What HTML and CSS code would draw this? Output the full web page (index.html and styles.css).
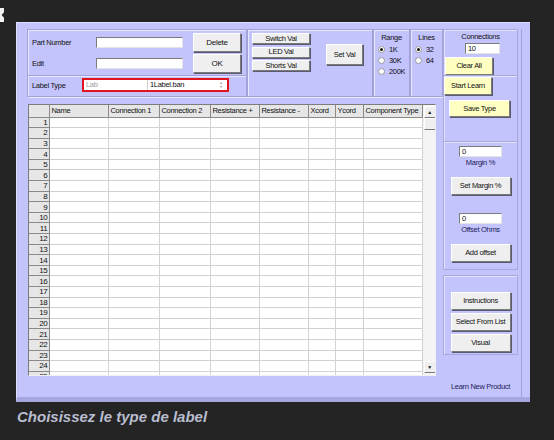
FILE: index.html
```html
<!DOCTYPE html>
<html lang="en">
<head>
  <meta charset="UTF-8" />
  <title>Learn New Product</title>
  <link rel="stylesheet" href="styles.css">
</head>
<body>

<div class="topbar"><div class="mark"></div></div>

<div class="window">
  <div class="main">
    <div class="top">
      <div class="panel panel-part">
        <div class="row">
          <span class="lbl">Part Number</span>
          <span class="field field-text"></span>
          <button class="btn btn-side">Delete</button>
        </div>
        <div class="row">
          <span class="lbl">Edit</span>
          <span class="field field-text"></span>
          <button class="btn btn-side">OK</button>
        </div>
        <div class="divider"></div>
        <div class="row row-type">
          <span class="lbl lbl-type">Label Type</span>
          <div class="type-box">
            <span class="field field-lab">Lab</span>
            <span class="field field-combo">1Label.ban<span class="spin">&#9652;<br>&#9662;</span></span>
          </div>
        </div>
      </div>

      <div class="panel panel-vals">
        <div class="val-btns">
          <button class="btn btn-small">Switch Val</button>
          <button class="btn btn-small">LED Val</button>
          <button class="btn btn-small">Shorts Val</button>
        </div>
        <button class="btn btn-set">Set Val</button>
      </div>

      <div class="panel panel-radio panel-range">
        <div class="ptitle">Range</div>
        <label class="radio"><span class="dot on"></span>1K</label>
        <label class="radio"><span class="dot"></span>30K</label>
        <label class="radio"><span class="dot"></span>200K</label>
      </div>

      <div class="panel panel-radio panel-lines">
        <div class="ptitle">Lines</div>
        <label class="radio"><span class="dot on"></span>32</label>
        <label class="radio"><span class="dot"></span>64</label>
      </div>
    </div>

    <div class="grid">
      <table class="sheet">
        <colgroup>
          <col style="width:20px"><col style="width:59px"><col style="width:51px">
          <col style="width:51px"><col style="width:49px"><col style="width:49px">
          <col style="width:27px"><col style="width:28px"><col style="width:59px">
        </colgroup>
        <thead>
          <tr>
            <th></th><th>Name</th><th>Connection 1</th><th>Connection 2</th>
            <th>Resistance +</th><th>Resistance -</th><th>Xcord</th><th>Ycord</th>
            <th>Component Type</th>
          </tr>
        </thead>
        <tbody id="rows"></tbody>
      </table>
      <div class="scroll">
        <div class="sb-btn">&#9650;</div>
        <div class="sb-thumb"></div>
        <div class="sb-track"></div>
        <div class="sb-btn">&#9660;</div>
      </div>
    </div>
  </div>

  <div class="side">
    <div class="box box-conn">
      <div class="ptitle">Connections</div>
      <span class="field field-conn">10</span>
      <button class="btn btn-yellow">Clear All</button>
    </div>
    <div class="box box-learn">
      <button class="btn btn-yellow">Start Learn</button>
      <button class="btn btn-yellow btn-save">Save Type</button>
    </div>
    <div class="box box-margin">
      <span class="field field-num">0</span>
      <div class="cap">Margin %</div>
      <button class="btn btn-wide">Set Margin %</button>
      <span class="field field-num field-offset">0</span>
      <div class="cap">Offset Ohms</div>
      <button class="btn btn-wide">Add offset</button>
    </div>
    <div class="box box-list">
      <button class="btn btn-wide">Instructions</button>
      <button class="btn btn-wide">Select From List</button>
      <button class="btn btn-wide">Visual</button>
    </div>
    <div class="learn-new">Learn New Product</div>
  </div>
</div>

<div class="caption">Choisissez le type de label</div>

<script>
  var rows = document.getElementById('rows');
  for (var i = 1; i <= 25; i++) {
    var tr = document.createElement('tr');
    tr.innerHTML = '<th class="num">' + i + '</th>' + '<td></td>'.repeat(8);
    rows.appendChild(tr);
  }
</script>

</body>
</html>
```

FILE: styles.css
```css
* {
  box-sizing: border-box;
}

body {
  margin: 0;
  width: 554px;
  height: 440px;
  overflow: hidden;
  background-color: #242424;
  font-family: "Liberation Sans", Arial, sans-serif;
  font-size: 7.5px;
  letter-spacing: -0.3px;
  color: #111;
}

.topbar {
  height: 22px;
  padding-top: 8px;
}

.mark {
  width: 4px;
  height: 14px;
  background-color: #f2f2f2;
  clip-path: polygon(0 0, 100% 0, 100% 30%, 40% 50%, 100% 70%, 100% 100%, 0 100%);
}

.window {
  margin-left: 16px;
  width: 514px;
  height: 380px;
  background-color: #c4c4fc;
  border-top: 1px solid #dedeff;
  border-left: 1px solid #dedeff;
  border-bottom: 5px solid #a6a6e0;
  padding: 6px 7px 0 10px;
  display: flex;
}

.main {
  width: 416px;
}

.top {
  display: flex;
  height: 68px;
}

.panel {
  border: 1px solid #a2a2d8;
  box-shadow: inset 1px 1px 0 #e8e8ff, 1px 1px 0 #e8e8ff;
}

/* part number / edit / label type */
.panel-part {
  width: 220px;
  padding: 3px 0 0 4px;
}

.row {
  display: flex;
  align-items: center;
  height: 19px;
  margin-bottom: 2px;
}

.lbl {
  width: 64px;
}

.field {
  display: block;
  background-color: #fff;
  border: 1px solid;
  border-color: #7c7c7c #e4e4e4 #e4e4e4 #7c7c7c;
  height: 11px;
  line-height: 9px;
  padding-left: 2px;
}

.field-text {
  width: 87px;
}

.btn {
  display: block;
  font-family: inherit;
  font-size: 7.5px;
  letter-spacing: inherit;
  color: #111;
  background-color: #efefef;
  border: 1px solid;
  border-color: #fff #7a7a7a #7a7a7a #fff;
  box-shadow: 1px 1px 0 #5a5a70;
  padding: 0;
  line-height: 1;
  white-space: nowrap;
}

.btn-side {
  width: 48px;
  height: 19px;
  margin-left: 10px;
  font-size: 8px;
}

.divider {
  height: 2px;
  margin: 0 0 1px -4px;
  border-top: 1px solid #a2a2d8;
  border-bottom: 1px solid #e8e8ff;
}

.row-type {
  height: 14px;
}

.lbl-type {
  width: 50px;
}

.type-box {
  display: flex;
  width: 147px;
  height: 14px;
  border: 2px solid #e0141c;
  background-color: #fff;
}

.type-box .field {
  height: 10px;
  border-width: 0;
}

.type-box .field-lab {
  width: 64px;
  color: #a0a0a0;
  border-right: 1px solid #d0d0d0;
}

.field-combo {
  position: relative;
  flex: 1;
}

.spin {
  position: absolute;
  right: 5px;
  top: 1px;
  font-size: 4px;
  line-height: 4px;
  color: #909090;
}

/* value buttons */
.panel-vals {
  width: 126px;
  display: flex;
  align-items: flex-start;
  padding: 3px 0 0 4px;
}

.val-btns {
  display: flex;
  flex-direction: column;
  gap: 2.5px;
}

.btn-small {
  width: 58px;
  height: 11px;
}

.btn-set {
  width: 37px;
  height: 21px;
  margin: 11px 0 0 16px;
}

/* radio groups */
.panel-radio {
  padding-top: 3px;
}

.panel-range {
  width: 37px;
  padding-left: 4px;
}

.panel-lines {
  width: 33px;
  padding-left: 4px;
}

.ptitle {
  text-align: center;
  height: 11px;
  line-height: 9px;
}

.panel-radio .ptitle {
  margin-left: -4px;
}

.radio {
  display: flex;
  align-items: center;
  height: 11px;
  gap: 4px;
}

.dot {
  width: 7px;
  height: 7px;
  border-radius: 50%;
  background-color: #fff;
  border: 1px solid #9a9a9a;
  display: flex;
  align-items: center;
  justify-content: center;
}

.dot.on::after {
  content: "";
  width: 3px;
  height: 3px;
  border-radius: 50%;
  background-color: #111;
}

/* data grid */
.grid {
  display: flex;
  width: 408px;
  height: 272px;
  margin: 7px 0 0 1px;
  border: 1px solid;
  border-color: #7c7c7c #f0f0f0 #f0f0f0 #7c7c7c;
  background-color: #fff;
  overflow: hidden;
}

.sheet {
  width: 393px;
  table-layout: fixed;
  border-collapse: collapse;
  border-right: 1px solid #6a6a6a;
  align-self: flex-start;
}

.sheet th {
  font-weight: normal;
  background-color: #e6e6e6;
  border-right: 1px solid #8a8a8a;
  border-bottom: 1px solid #8a8a8a;
  padding: 0 2px;
  white-space: nowrap;
  overflow: hidden;
  text-align: left;
}

.sheet thead th {
  height: 12px;
  line-height: 10px;
}

.sheet tbody tr {
  height: 10.6px;
}

.sheet .num {
  text-align: right;
  padding: 0 1px 0 0;
  line-height: 9px;
  font-size: 8px;
}

.sheet td {
  border-right: 1px solid #d2d2d2;
  border-bottom: 1px solid #d2d2d2;
  padding: 0;
}

.scroll {
  width: 14px;
  display: flex;
  flex-direction: column;
  background-color: #f4f4f4;
  padding: 1px 0 2px 1px;
}

.sb-btn,
.sb-thumb {
  height: 12px;
  width: 12px;
  background-color: #efefef;
  border: 1px solid;
  border-color: #fff #7a7a7a #7a7a7a #fff;
}

.sb-btn {
  font-size: 5px;
  line-height: 10px;
  text-align: center;
}

.sb-track {
  flex: 1;
}

/* right column */
.side {
  width: 79px;
  border-right: 1px solid #a2a2d8;
  display: flex;
  flex-direction: column;
}

.box {
  width: 75px;
  border: 1px solid #a8a8dc;
  box-shadow: inset 1px 1px 0 #e2e2ff;
}

.box-conn {
  height: 47px;
  padding-top: 2px;
}

.field-conn {
  width: 35px;
  height: 11px;
  margin: 0 0 3px 21px;
}

.btn-yellow {
  background-color: #ffffc2;
  width: 48px;
  height: 18px;
}

.box-conn .btn-yellow {
  margin-left: 1px;
}

.box-learn {
  height: 67px;
  margin-top: -1px;
  padding-top: 1px;
}

.btn-save {
  width: 61px;
  height: 17px;
  margin: 5px 0 0 5px;
}

.box-margin {
  height: 129px;
  margin-top: -1px;
  padding-top: 4px;
  display: flex;
  flex-direction: column;
  align-items: center;
}

.field-num {
  width: 43px;
  height: 11px;
}

.cap {
  color: #1c1c5a;
  height: 11px;
  line-height: 12px;
  margin-bottom: 9px;
}

.field-offset {
  margin-top: 18px;
}

.btn-wide {
  width: 60px;
  height: 18px;
}

.box-list {
  height: 80px;
  margin-top: 5px;
  padding-top: 16px;
  display: flex;
  flex-direction: column;
  align-items: center;
  gap: 3px;
}

.learn-new {
  margin-top: 27px;
  text-align: center;
  color: #1c1c5a;
  width: 75px;
}

.caption {
  margin: 6px 0 0 17px;
  font-family: "Liberation Sans", Arial, sans-serif;
  font-weight: bold;
  font-style: italic;
  font-size: 15px;
  letter-spacing: 0;
  color: #b9bdd0;
}
```
